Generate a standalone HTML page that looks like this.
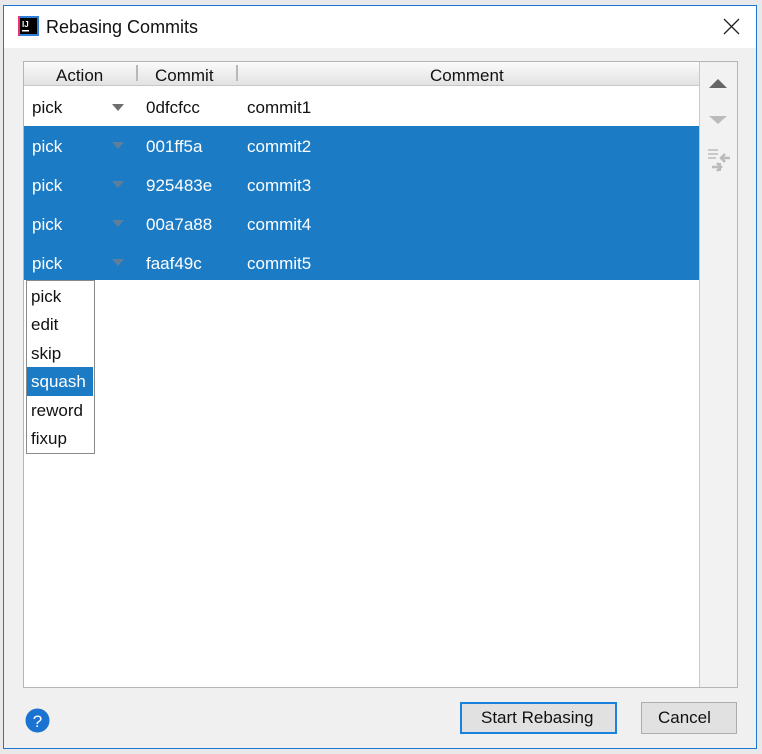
<!DOCTYPE html>
<html><head><style>
*{margin:0;padding:0;box-sizing:border-box}
body{width:762px;height:754px;background:#e9e9e9;position:relative;overflow:hidden;font-family:"Liberation Sans",sans-serif;font-size:17px;color:#111}
.a{position:absolute}
.win{left:3px;top:5px;width:754px;height:744px;border:1px solid #1979d0;background:#f0f0f0}
.title{left:4px;top:6px;width:752px;height:42px;background:#fff}
.t{position:absolute;white-space:nowrap}
.row{left:24px;width:675px;height:39px}
.sel{background:#1b7bc4;color:#fff}
.tri{position:absolute;width:0;height:0;border-left:6px solid transparent;border-right:6px solid transparent;border-top:7px solid #6e6e6e}
.sel .tri{border-top-color:#5e7f9c}
</style></head><body>
<div class="a win"></div>
<div class="a title"></div>
<svg class="a" style="left:18px;top:16px" width="21" height="20"><rect x="0" y="0" width="21" height="20" fill="#e8336c"/><rect x="2" y="0" width="19" height="20" fill="#2f7fd9"/><rect x="2" y="2" width="17" height="16" fill="#000"/><text x="4" y="11" font-size="8" fill="#fff" font-family="Liberation Sans" font-weight="bold">IJ</text><rect x="4" y="14" width="7" height="1.5" fill="#fff"/></svg>
<div class="t" style="left:46px;top:17px;font-size:18px">Rebasing Commits</div>
<svg class="a" style="left:723px;top:18px" width="17" height="17"><path d="M1 1L16 16M16 1L1 16" stroke="#222" stroke-width="1.3"/></svg>

<div class="a" style="left:23px;top:61px;width:715px;height:627px;border:1px solid #b5b5b5;background:#fff"></div>
<div class="a" style="left:24px;top:62px;width:675px;height:24px;background:linear-gradient(#fbfbfb,#e2e2e2);border-bottom:1px solid #c8c8c8"></div>
<div class="a" style="left:136px;top:65px;width:2px;height:16px;background:#b8b8b8"></div>
<div class="a" style="left:236px;top:65px;width:2px;height:16px;background:#b8b8b8"></div>
<div class="t" style="left:56px;top:66px">Action</div>
<div class="t" style="left:155px;top:66px">Commit</div>
<div class="t" style="left:430px;top:66px">Comment</div>
<div class="a" style="left:699px;top:62px;width:38px;height:625px;background:#f2f2f2;border-left:1px solid #c8c8c8"></div>
<svg class="a" style="left:708px;top:75px" width="24" height="100"><path d="M1 13L10 4L19 13Z" fill="#666"/><path d="M1 41L19 41L10 49Z" fill="#bbb"/><g stroke="#bbb" stroke-width="1.5"><path d="M0 75H10M0 79H10M0 83H8"/></g><path d="M4 92L11 92M9 88L13 92L9 96" stroke="#bbb" stroke-width="2.5" fill="none"/><path d="M22 83L14 83M17 79L13 83L17 87" stroke="#bbb" stroke-width="2.5" fill="none"/><path d="M12 96L12 88" stroke="#bbb" stroke-width="2"/></svg>

<div class="a row" style="top:87px"><div class="t" style="left:8px;top:11px">pick</div><div class="tri" style="left:88px;top:17px"></div><div class="t" style="left:122px;top:11px">0dfcfcc</div><div class="t" style="left:223px;top:11px">commit1</div></div>
<div class="a row sel" style="top:126px;height:38px"><div class="t" style="left:8px;top:11px">pick</div><div class="tri" style="left:88px;top:16px"></div><div class="t" style="left:122px;top:11px">001ff5a</div><div class="t" style="left:223px;top:11px">commit2</div></div>
<div class="a row sel" style="top:164px"><div class="t" style="left:8px;top:12px">pick</div><div class="tri" style="left:88px;top:17px"></div><div class="t" style="left:122px;top:12px">925483e</div><div class="t" style="left:223px;top:12px">commit3</div></div>
<div class="a row sel" style="top:203px"><div class="t" style="left:8px;top:12px">pick</div><div class="tri" style="left:88px;top:17px"></div><div class="t" style="left:122px;top:12px">00a7a88</div><div class="t" style="left:223px;top:12px">commit4</div></div>
<div class="a row sel" style="top:242px;height:38px"><div class="t" style="left:8px;top:12px">pick</div><div class="tri" style="left:88px;top:17px"></div><div class="t" style="left:122px;top:12px">faaf49c</div><div class="t" style="left:223px;top:12px">commit5</div></div>

<div class="a" style="left:26px;top:280px;width:69px;height:174px;border:1px solid #8a8a8a;background:#fff"></div>
<div class="a" style="left:27px;top:367px;width:66px;height:29px;background:#1b7bc4"></div>
<div class="t" style="left:31px;top:287px">pick</div>
<div class="t" style="left:31px;top:315px">edit</div>
<div class="t" style="left:31px;top:344px">skip</div>
<div class="t" style="left:31px;top:372px;color:#fff">squash</div>
<div class="t" style="left:31px;top:401px">reword</div>
<div class="t" style="left:31px;top:429px">fixup</div>

<svg class="a" style="left:25px;top:708px" width="25" height="25"><circle cx="12.5" cy="12.5" r="12" fill="#1a73d0"/><text x="12.5" y="19" text-anchor="middle" font-size="17" fill="#fff" font-family="Liberation Sans">?</text></svg>
<div class="a" style="left:460px;top:702px;width:157px;height:32px;border:2px solid #1a82dc;background:#e1e1e1"></div>
<div class="t" style="left:481px;top:708px">Start Rebasing</div>
<div class="a" style="left:641px;top:702px;width:96px;height:32px;border:1px solid #adadad;background:#e1e1e1"></div>
<div class="t" style="left:658px;top:708px">Cancel</div>
</body></html>
